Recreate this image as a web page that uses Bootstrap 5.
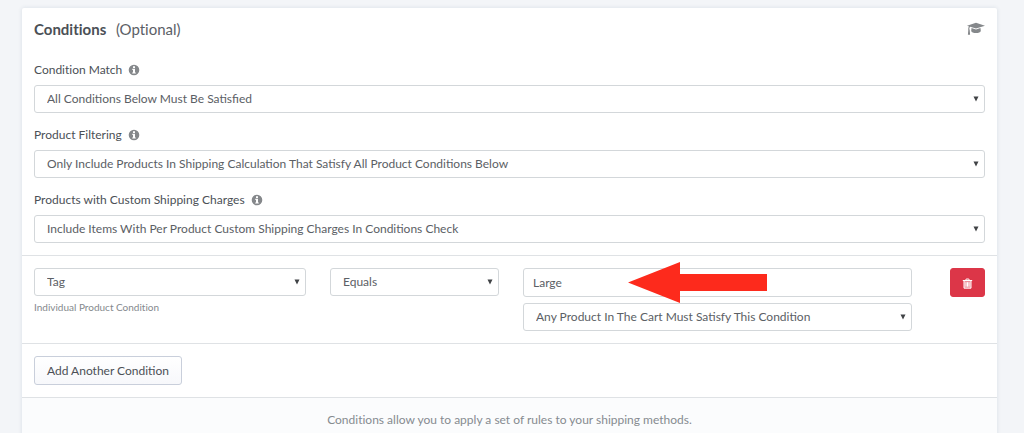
<!DOCTYPE html>
<html lang="en">
<head>
<meta charset="utf-8">
<meta name="viewport" content="width=device-width, initial-scale=1">
<title>Conditions</title>
<link href="https://cdn.jsdelivr.net/npm/bootstrap@5.3.0/dist/css/bootstrap.min.css" rel="stylesheet">
<style>
  body { background: #f3f5f8; color: #4b5056; font-family: Lato, "Open Sans", sans-serif; font-size: 12px; line-height: 20px; font-variant-ligatures: none; }
  .panel { margin: 8px 27px 0 22px; border: 0; border-radius: 2px; color: inherit; box-shadow: 0 0 4px rgba(60, 90, 120, .14); }
  .section { padding: 12px; }
  .section + .section { border-top: 1px solid #dfe2e5; }
  .section-head { margin-bottom: 22px; }
  .title { font-size: 15px; line-height: 18px; font-weight: 700; color: #4b5056; }
  .title span { font-weight: 400; margin-left: 6px; color: #5b6066; }
  .field { margin-bottom: 12px; }
  .field:last-child { margin-bottom: 0; }
  .form-label { display: flex; align-items: center; gap: 6px; margin-bottom: 5px; }
  .form-select, .form-control { padding: 0 9px; border-color: #d3d7da; border-radius: 3px; font-size: 12px; color: #5b6065; }
  .form-control { height: 29px; }
  .form-select { height: 28px; padding: 0 24px 0 12px; background-image: url("data:image/svg+xml,%3Csvg xmlns='http://www.w3.org/2000/svg' viewBox='0 0 6 6'%3E%3Cpath fill='%23404346' d='M.5.5h5L3 5.5z'/%3E%3C/svg%3E"); background-size: 6px 6px; background-position: right 5px center; }
  .rule { display: grid; grid-template-columns: 272fr 169fr 389fr 49fr; gap: 24px; }
  .values { display: grid; gap: 6px; }
  .hint { font-size: 10px; line-height: 22px; color: #85898d; }
  .btn { height: 29px; padding: 0 12px; border-radius: 3px; font-size: 12px; line-height: 27px; }
  .btn-add { color: #4b5056; border-color: #c9cfdb; background: linear-gradient(#fff, #f7f8fb); }
  .btn-danger { width: 35px; padding: 0; background: #dc3648; border-color: #dc3648; }
  .arrow { top: -6px; left: 27%; width: 139px; height: 41px; pointer-events: none; }
  .note { background: #fbfcfd; color: #868b90; }
  .icon-grey { fill: #85888b; }
</style>
</head>
<body>
<svg class="d-none">
  <symbol id="info" viewBox="0 0 12 12"><path fill-rule="evenodd" d="M6 .7a5.3 5.3 0 1 1 0 10.6A5.3 5.3 0 0 1 6 .7zM5 2.3v1.6h2V2.3zM4.3 4.8v1.1H5v2.5h-.8v1.2h3.6V8.400H7V4.800z"/></symbol>
</svg>
<main class="card panel">
  <section class="section">
    <div class="section-head d-flex justify-content-between align-items-center">
      <h1 class="title mb-0">Conditions <span>(Optional)</span></h1>
      <a href="#" aria-label="Learn more" class="d-flex"><svg class="icon-grey" width="18" height="14" viewBox="0 0 18 14"><path d="M9 .8 18 3.700 9 6.600 3.200 4.800Q2.400 5.300 2.300 6.700L2.700 8 3.100 12.800H.9L1.300 8 1.200 7Q1.300 5.200 2 4.400L0 3.700zM4.500 6.100 9 7.500l4.500-1.400.3 3Q13 11.100 9 11.100T4.200 9.100z"/></svg></a>
    </div>
    <div class="field">
      <label class="form-label" for="match">Condition Match <svg class="icon-grey" width="12" height="12"><use href="#info"/></svg></label>
      <select class="form-select" id="match"><option>All Conditions Below Must Be Satisfied</option></select>
    </div>
    <div class="field">
      <label class="form-label" for="filter">Product Filtering <svg class="icon-grey" width="12" height="12"><use href="#info"/></svg></label>
      <select class="form-select" id="filter"><option>Only Include Products In Shipping Calculation That Satisfy All Product Conditions Below</option></select>
    </div>
    <div class="field">
      <label class="form-label" for="custom">Products with Custom Shipping Charges <svg class="icon-grey" width="12" height="12"><use href="#info"/></svg></label>
      <select class="form-select" id="custom"><option>Include Items With Per Product Custom Shipping Charges In Conditions Check</option></select>
    </div>
  </section>
  <section class="section rule">
    <div>
      <select class="form-select" aria-label="Condition type"><option>Tag</option></select>
      <div class="hint">Individual Product Condition</div>
    </div>
    <div><select class="form-select" aria-label="Operator"><option>Equals</option></select></div>
    <div class="values position-relative">
      <input class="form-control" type="text" value="Large" aria-label="Tag value">
      <select class="form-select" aria-label="Applies to"><option>Any Product In The Cart Must Satisfy This Condition</option></select>
      <svg class="arrow position-absolute" viewBox="0 0 139 41"><path fill="#fd2a1c" d="M0 20.500 52 0v12h87v17H52v12z"/></svg>
    </div>
    <div class="text-end">
      <button type="button" class="btn btn-danger" aria-label="Delete condition"><svg width="11" height="11" viewBox="0 0 11 11"><path fill="#fff" fill-opacity=".45" d="M2 3h7v7H2z"/><path fill="none" stroke="#fff" d="M.8 2.500h9.400M3.600 2.500l.6-1.500h2.600l.6 1.500M2 2.500v7.700h7V2.500M4 4.200v4.500M5.500 4.200v4.500M7 4.200v4.500"/></svg></button>
    </div>
  </section>
  <section class="section">
    <button type="button" class="btn btn-add">Add Another Condition</button>
  </section>
  <section class="section note text-center">Conditions allow you to apply a set of rules to your shipping methods.</section>
</main>
<script src="https://cdn.jsdelivr.net/npm/bootstrap@5.3.0/dist/js/bootstrap.bundle.min.js"></script>
</body>
</html>
